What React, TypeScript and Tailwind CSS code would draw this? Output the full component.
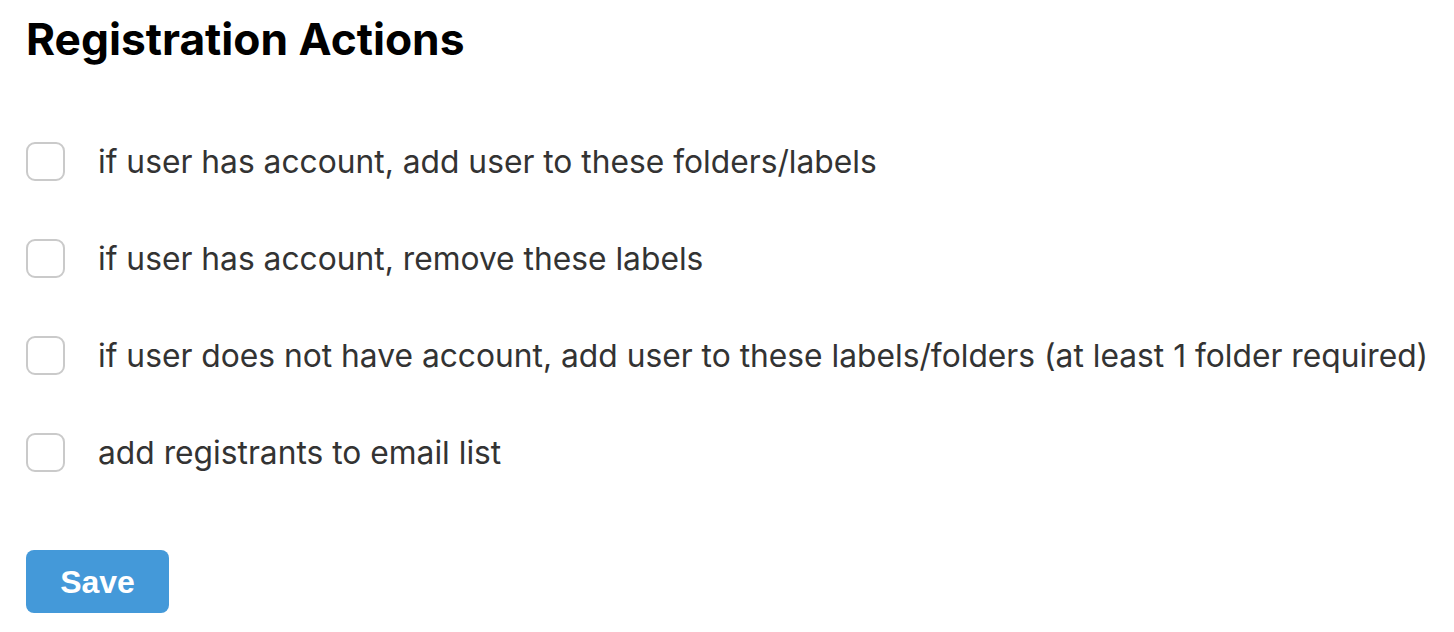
export default function App() {
  const items = [
    "if user has account, add user to these folders/labels",
    "if user has account, remove these labels",
    "if user does not have account, add user to these labels/folders (at least 1 folder required)",
    "add registrants to email list",
  ];
  return (
    <div className="bg-white w-[1454px] h-[632px] overflow-hidden pl-[26px]" style={{ fontFamily: "Inter, 'Noto Sans', sans-serif" }}>
      <h1 className="text-[44.3px] font-bold text-black leading-none pt-[17px]">Registration Actions</h1>
      <div className="flex flex-col mt-[81px] gap-[58px]">
        {items.map((t) => (
          <label key={t} className="flex items-center gap-[33px] h-[39px]">
            <span className="w-[39px] h-[39px] shrink-0 rounded-[9px] border-2 border-[#cacaca] bg-white" />
            <span className="text-[31.75px] text-[#333333] whitespace-nowrap">{t}</span>
          </label>
        ))}
      </div>
      <button className="mt-[78px] w-[143px] h-[63px] rounded-[8px] bg-[#4499d9] text-white text-[32px] font-bold leading-none" style={{ fontFamily: "'Liberation Sans', Arial, sans-serif" }}>
        Save
      </button>
    </div>
  );
}
